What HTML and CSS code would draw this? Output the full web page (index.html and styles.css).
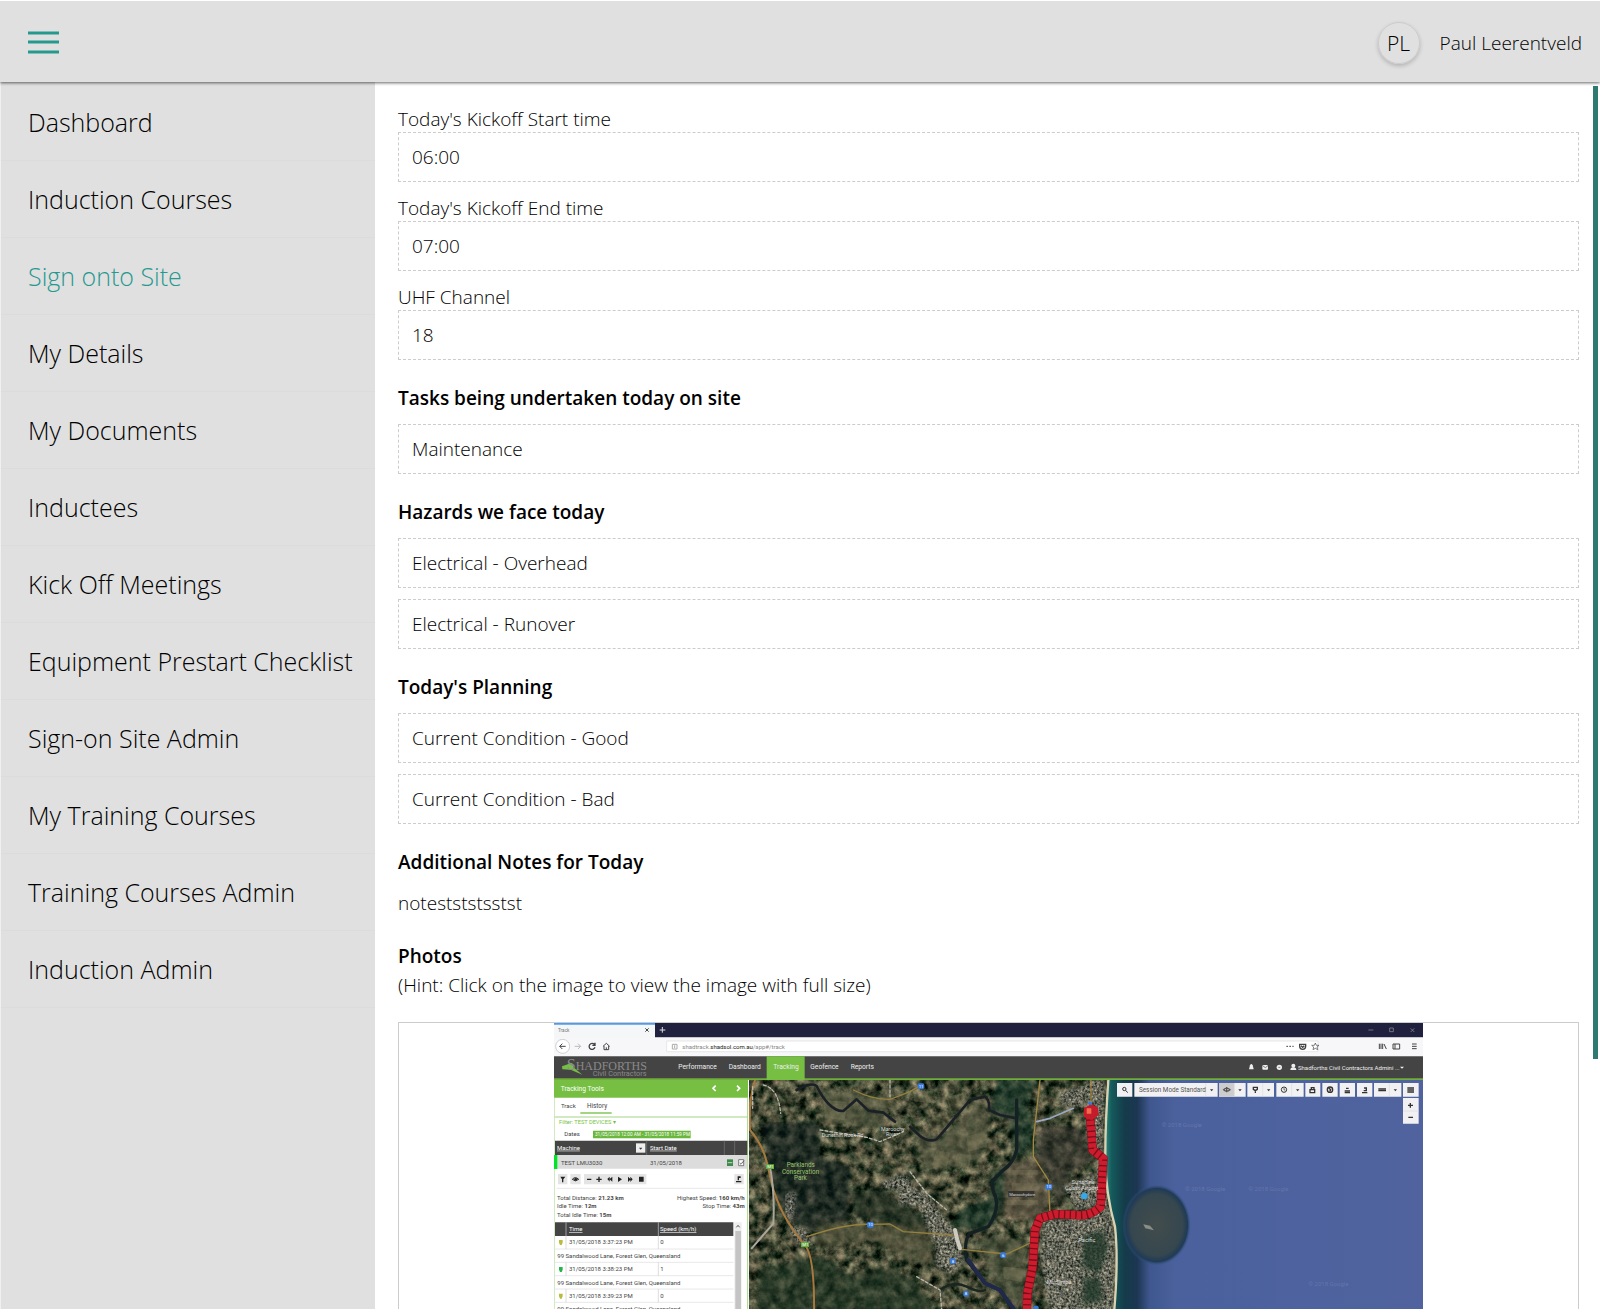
FILE: index.html
```
<!DOCTYPE html>
<html lang="en">
<head>
    <meta charset="UTF-8">
    <meta name="viewport" content="width=device-width, initial-scale=1.0">
    <title>Kick Off Meeting</title>
    <link rel="stylesheet" href="styles.css">
</head>
<body>
    <header class="topbar">
        <button type="button" class="menu-button" aria-label="Menu">
            <svg width="31" height="24" viewBox="0 0 31 24">
                <path d="M0 2h31M0 11h31M0 21h31" stroke="#26998f" stroke-width="3"/>
            </svg>
        </button>
        <div class="user">
            <span class="avatar">PL</span>
            <span>Paul Leerentveld</span>
        </div>
    </header>

    <div class="layout">
        <nav class="sidebar">
            <a href="#">Dashboard</a>
            <a href="#">Induction Courses</a>
            <a href="#" class="active">Sign onto Site</a>
            <a href="#">My Details</a>
            <a href="#">My Documents</a>
            <a href="#">Inductees</a>
            <a href="#">Kick Off Meetings</a>
            <a href="#">Equipment Prestart Checklist</a>
            <a href="#">Sign-on Site Admin</a>
            <a href="#">My Training Courses</a>
            <a href="#">Training Courses Admin</a>
            <a href="#">Induction Admin</a>
        </nav>

        <main class="content">
            <div class="field">
                <label for="startTime">Today's Kickoff Start time</label>
                <input type="text" id="startTime" class="box" value="06:00" readonly>
            </div>
            <div class="field">
                <label for="endTime">Today's Kickoff End time</label>
                <input type="text" id="endTime" class="box" value="07:00" readonly>
            </div>
            <div class="field">
                <label for="uhf">UHF Channel</label>
                <input type="text" id="uhf" class="box" value="18" readonly>
            </div>

            <h2>Tasks being undertaken today on site</h2>
            <ul class="list">
                <li class="box">Maintenance</li>
            </ul>

            <h2>Hazards we face today</h2>
            <ul class="list">
                <li class="box">Electrical - Overhead</li>
                <li class="box">Electrical - Runover</li>
            </ul>

            <h2>Today's Planning</h2>
            <ul class="list">
                <li class="box">Current Condition - Good</li>
                <li class="box">Current Condition - Bad</li>
            </ul>

            <h2>Additional Notes for Today</h2>
            <p class="notes">notestststsstst</p>

            <h2 class="photos-title">Photos</h2>
            <p>(Hint: Click on the image to view the image with full size)</p>

            <a href="#" class="photo" aria-label="View photo">
                <svg class="photo-image" viewBox="0 0 2607 1200">
                    <defs>
                        <linearGradient id="sea" x1="0" x2="1" y1="0" y2="0">
                            <stop offset="0" stop-color="#2a8a80"/>
                            <stop offset=".02" stop-color="#155a5c"/>
                            <stop offset=".06" stop-color="#143c4a"/>
                            <stop offset=".1" stop-color="#1c3652"/>
                            <stop offset=".14" stop-color="#3f578e"/>
                            <stop offset=".22" stop-color="#4a619d"/>
                            <stop offset="1" stop-color="#50639f"/>
                        </linearGradient>
                        <radialGradient id="reef">
                            <stop offset="0" stop-color="#424c4c"/>
                            <stop offset=".75" stop-color="#36474f"/>
                            <stop offset=".9" stop-color="#1f3b55"/>
                            <stop offset="1" stop-color="#3c568c" stop-opacity="0"/>
                        </radialGradient>
                        <filter id="ground" x="0" y="0" width="1" height="1" color-interpolation-filters="sRGB">
                            <feTurbulence type="fractalNoise" baseFrequency=".035" numOctaves="5" seed="8"/>
                            <feColorMatrix values=".9 .5 0 0 -.43  .7 .5 0 0 -.31  .6 .4 0 0 -.29  0 0 0 0 1"/>
                        </filter>
                        <filter id="town" x="0" y="0" width="1" height="1" color-interpolation-filters="sRGB">
                            <feTurbulence type="fractalNoise" baseFrequency=".14" numOctaves="3" seed="3"/>
                            <feColorMatrix values="1.2 0 0 0 -.15  1.2 0 0 0 -.15  1.1 0 0 0 -.14  0 0 0 0 1" result="n"/>
                            <feGaussianBlur in="SourceGraphic" stdDeviation="6" result="shape"/>
                            <feComposite in="n" in2="shape" operator="in"/>
                        </filter>
                        <filter id="soft"><feGaussianBlur stdDeviation="6"/></filter>
                        <clipPath id="mapClip"><path d="M27 60H2049V1100H27z"/></clipPath>
                    </defs>
                    <path d="M0 0H2607V1200H0z" fill="#fff"/>

                    <!-- browser window -->
                    <path d="M0 0H2607V43H0z" fill="#20213f"/>
                    <path d="M0 0H303V46H0z" fill="#f5f6f8"/>
                    <path d="M0 0H303V5H0z" fill="#4c9bf0"/>
                    <path d="M0 45H2607V100H0z" fill="#f7f7f9"/>
                    <path d="M338 54H2292V86H338z" fill="#fff" stroke="#ddd" stroke-width="2"/>
                    <g fill="none" stroke="#444" stroke-width="3">
                        <path d="M274 16l10 10M284 16l-10 10"/>
                        <circle cx="26" cy="70" r="21" fill="#fff" stroke="#bbb" stroke-width="2"/>
                        <path d="M35 70H17M25 62l-8 8 8 8"/>
                        <path d="M62 70h18M72 62l8 8-8 8" stroke="#bbb"/>
                        <path d="M121 64a9 9 0 1 0 2 9M123 59v8h-8" stroke-width="4"/>
                        <path d="M147 70l10-9 10 9M150 69v11h14V69M157 80v-7"/>
                        <path d="M355 64h14v14h-14zM362 67v8" stroke="#aaa"/>
                        <path d="M317 21h17M325 12v17" stroke="#ddd"/>
                        <path d="M2443 21h15M2507 15h11v11h-11zM2570 16l11 11M2581 16l-11 11" stroke="#999" stroke-width="2"/>
                        <path d="M2197 70h22" stroke-dasharray="5 4"/>
                        <path d="M2237 64h18v6a9 9 0 0 1-18 0zM2241 68l5 5 5-5" stroke-width="4"/>
                        <path d="M2284 60l3 7h8l-6 5 2 8-7-4-7 4 2-8-6-5h8z" stroke-width="2"/>
                        <path d="M2476 62v16M2481 62v16M2486 62v16M2490 63l7 15M2517 63h20v15h-20zM2523 63v15M2574 63h14M2574 70h14M2574 77h14"/>
                    </g>
                    <g class="tiny">
                        <text x="12" y="27" font-size="14" fill="#777">Track</text>
                        <text x="385" y="77" fill="#888" font-size="18">shadtrack.<tspan fill="#222">shadsol.com.au</tspan>/app#/track</text>
                    </g>

                    <!-- site header -->
                    <path d="M0 100H2607V171H0z" fill="#444"/>
                    <path d="M0 166H2607V171H0z" fill="#6fae3a"/>
                    <path d="M638 100H752V171H638z" fill="#76bf43"/>
                    <path d="M24 130l30-11 4 14 27 22-35-15-25-1z" fill="#76bf43"/>
                    <g class="logo" fill="#8a8a8a">
                        <text x="38" y="140" font-size="48">S</text>
                        <text x="65" y="140" font-size="36">HADFORTHS</text>
                    </g>
                    <g class="tiny" fill="#eee" font-size="20">
                        <text x="116" y="160" font-size="22" fill="#8a8a8a">Civil Contractors</text>
                        <text x="373" y="139">Performance</text>
                        <text x="524" y="139">Dashboard</text>
                        <text x="658" y="139">Tracking</text>
                        <text x="769" y="139">Geofence</text>
                        <text x="890" y="139">Reports</text>
                        <text x="2232" y="140" font-size="18">Shadforths Civil Contractors Admini ...</text>
                    </g>
                    <g fill="#eee">
                        <path d="M2085 139l3-12q4-8 8 0l3 12z"/>
                        <rect x="2125" y="126" width="17" height="14" rx="3"/>
                        <circle cx="2176" cy="133" r="8"/>
                        <circle cx="2218" cy="128" r="6"/>
                        <path d="M2209 141q0-8 9-8t9 8zM2538 131h12l-6 6z"/>
                    </g>
                    <path d="M2126 128l8 6 8-6M2173 133h6" fill="none" stroke="#444" stroke-width="2"/>

                    <!-- satellite map -->
                    <g transform="translate(558 111)" clip-path="url(#mapClip)">
                        <path d="M27 60H1140V1100H27z" filter="url(#ground)"/>
                        <g filter="url(#soft)" opacity=".6">
                            <path d="M60 190L235 185 240 290 330 320 325 480 230 520 160 490 100 400 80 270z" fill="#0a1f1d"/>
                            <path d="M330 400L420 385 470 420 560 480 550 530 440 490 350 470z" fill="#13271f"/>
                            <path d="M60 620L250 590 340 650 420 620 520 660 580 747 560 900H40z" fill="#1b3022"/>
                            <path d="M770 60H890L860 130 880 250 800 340 790 440 740 510 640 500 660 450 750 420 760 340 830 290 810 180 750 160z" fill="#12382a"/>
                            <path d="M900 200L1020 200 1060 300 990 340 960 440 930 360 890 290z" fill="#32302d"/>
                            <path d="M240 90L440 110 430 200 250 190z" fill="#5b6146"/>
                            <path d="M520 200L600 240 720 120 750 180 720 300 560 330z" fill="#5e6049"/>
                            <path d="M800 310L900 300 930 440 880 480 790 470z" fill="#6b5d4c"/>
                            <path d="M720 530L860 540 850 747 760 680z" fill="#505640"/>
                            <path d="M240 490L560 500 580 610 500 600 400 540 220 560z" fill="#58583f"/>
                        </g>
                        <g fill="#8a8665" opacity=".3">
                            <path d="M620 110l50-10 15 55-50 12zM560 180l60-25 20 50-60 20zM250 120l70 5-5 55-60-5zM680 230l60-20v50l-55 15zM815 330h80v14h-80zM815 370h80v22h-80zM800 420h95v16h-95zM650 280l45 5-10 40-40-8z"/>
                            <path d="M860 565l30 10-20 40-25-10zM790 620l60 6-4 40-55-10zM420 110l60 10-5 30-58-8zM520 90l60 4-8 36-50-6zM590 270l40 8-10 50-44-12z"/>
                        </g>
                        <g filter="url(#town)" opacity=".75">
                            <path d="M430 360L500 340 520 380 560 400 610 470 655 520 670 600 640 640 585 620 590 560 560 500 540 440 480 435 470 390 425 385z"/>
                            <path d="M1040 60L1095 60 1088 200 1088 340 1105 430 1125 540 1120 747 1118 900H1000L920 720 900 580 910 480 1060 470 1075 280 1040 240z"/>
                            <path d="M955 100L1040 75 1030 140 970 140zM970 380L1060 340 1070 440 1010 450zM135 400L170 400 160 480 135 470z"/>
                            <path d="M140 490L200 510 220 560 170 550z"/>
                        </g>
                        <path d="M1030 530l60-20 12 60-25 70-50-20zM1030 650l50 5 8 70-60 10z" fill="#1c3527" opacity=".75" filter="url(#soft)"/>
                        <g fill="none" stroke-linecap="round" stroke-linejoin="round">
                            <path d="M170 90Q215 65 230 78C250 120 280 155 310 153L350 118 385 152 430 158 465 185M510 200L540 228Q565 248 590 238L610 215 690 120 735 110Q750 120 747 150L780 165 830 175" stroke="#1a2026" stroke-width="8"/>
                            <path d="M830 120V270Q820 310 790 330L755 365 760 395Q785 440 745 500L690 520Q670 540 680 600L735 670 780 690 820 750" stroke="#142022" stroke-width="10"/>
                            <path d="M685 600L735 670 780 690 830 760" stroke="#20294a" stroke-width="12"/>
                            <path d="M600 690Q640 660 680 680T735 690" stroke="#1a2420" stroke-width="7"/>
                            <path d="M45 60Q25 120 30 210C80 270 80 310 95 370S140 490 190 550Q225 580 222 760" stroke="#a8793f" stroke-width="6"/>
                            <path d="M90 320Q105 400 100 490L35 565" stroke="#aaa79c" stroke-width="6"/>
                            <path d="M70 75Q115 85 122 160M38 80V145M450 60V110M240 210L380 232 420 245 490 215M510 335L560 400 620 450M530 650L600 690 605 747" stroke="#b9b6ab" stroke-width="4" stroke-dasharray="9 6"/>
                            <path d="M900 60L880 240 880 290 925 360 930 460M1053 60V130" stroke="#a08845" stroke-width="4"/>
                            <path d="M340 90Q400 120 450 118L510 95 535 80M200 530Q320 490 390 493L450 492 490 515 640 525M665 568L800 582 880 545" stroke="#95813f" stroke-width="4"/>
                            <path d="M890 185L930 175 1000 145" stroke="#9aa9c3" stroke-width="5"/>
                            <path d="M645 510L652 540 660 565" stroke="#cfcac0" stroke-width="12"/>
                        </g>

                        <path d="M1105 60Q1095 200 1096 300T1125 500Q1136 600 1122 760V1100H2049V60z" fill="url(#sea)"/>
                        <path d="M1105 60Q1095 200 1096 300T1125 500Q1136 600 1122 760V1100" fill="none" stroke="#d9d3b4" stroke-width="7"/>
                        <ellipse cx="1250" cy="495" rx="103" ry="122" fill="url(#reef)"/>
                        <path d="M1210 493l20 4 12 14-26-6z" fill="#8a8f86"/>

                        <!-- tracked route -->
                        <g fill="none" stroke-linejoin="round">
                            <path d="M1050 165L1058 270 1090 295 1082 440Q1050 470 1010 465L945 462 900 475 885 510 878 620 862 700 850 1100" stroke="#7c0e19" stroke-width="26"/>
                            <path d="M1050 165L1058 270 1090 295 1082 440Q1050 470 1010 465L945 462 900 475 885 510 878 620 862 700 850 1100" stroke="#cc1c2e" stroke-width="24" stroke-dasharray="13 4"/>
                        </g>
                        <path d="M1032 145l22-14 20 12 2 22-20 16-24-10z" fill="#c41c2a"/>
                        <path d="M1040 145h14v16h-14z" fill="#ef6b4c"/>

                        <g fill="#3778d8">
                            <rect x="533" y="70" width="20" height="17" rx="5"/>
                            <rect x="381" y="485" width="20" height="18" rx="5"/>
                            <rect x="916" y="372" width="21" height="17" rx="5"/>
                            <rect x="630" y="595" width="17" height="17" rx="5"/>
                            <rect x="781" y="577" width="17" height="17" rx="5"/>
                            <rect x="670" y="693" width="16" height="17" rx="5"/>
                            <rect x="880" y="737" width="16" height="17" rx="5"/>
                            <path d="M1043 132l6-8 8 4-2 8z"/>
                            <circle cx="1033" cy="408" r="10" fill="#35a8e8"/>
                        </g>
                        <path d="M78 313h24v14H78zM183 547h24v14h-24z" fill="#63ad3c"/>
                        <path d="M805 393h78v17h-78z" fill="#2b2b28" opacity=".8"/>
                        <g class="tiny" font-size="17" fill="#ddd">
                            <text x="808" y="407" font-size="12">Maroochydore</text>
                            <text x="245" y="230" font-size="16">Dunethin Rock Rd</text>
                            <text x="423" y="212" font-size="16">Maroochy</text>
                            <text x="438" y="228" font-size="16">River</text>
                            <text x="995" y="373">Sunshine</text>
                            <text x="975" y="391">Coast Airport</text>
                            <text x="920" y="672">Mudjimba</text>
                            <text x="1015" y="546">Pacific</text>
                            <g fill="#9cc46f" font-size="19">
                                <text x="140" y="321">Parklands</text>
                                <text x="126" y="341">Conservation</text>
                                <text x="162" y="360">Park</text>
                            </g>
                            <g fill="#6475ab" font-size="18">
                                <text x="1265" y="201">© 2018 Google</text>
                                <text x="1335" y="394">© 2018 Google</text>
                                <text x="1525" y="394">© 2018 Google</text>
                                <text x="1705" y="678">© 2018 Google</text>
                            </g>
                            <g fill="#fff" font-size="13">
                                <text x="536" y="83">11</text>
                                <text x="384" y="499">10</text>
                                <text x="919" y="385">10</text>
                                <text x="635" y="608">8</text>
                                <text x="786" y="590">6</text>
                                <text x="674" y="706">8</text>
                                <text x="82" y="325">M1</text>
                                <text x="187" y="559">M1</text>
                            </g>
                        </g>
                    </g>

                    <!-- map toolbar -->
                    <g transform="translate(1668 -24)">
                        <path d="M21 204h46v41H21zM73 204h250v41H73zM327 204h80v41h-80zM412 204h80v41h-80zM499 204h82v41h-82zM586 204h45v41h-45zM637 204h46v41h-46zM689 204h46v41h-46zM741 204h46v41h-46zM792 204h82v41h-82zM879 204h47v41h-47zM879 249h47v77h-47z" fill="#f1f1f3"/>
                        <path d="M327 204h46v41h-46z" fill="#ccc"/>
                        <path d="M287 204v41M373 204v41M458 204v41M545 204v41M838 204v41M879 288h47" stroke="#ddd" stroke-width="2"/>
                        <path d="M300 223h10l-5 6zM385 223h10l-5 6zM471 223h10l-5 6zM558 223h10l-5 6zM851 223h10l-5 6z" fill="#333"/>
                        <g fill="none" stroke="#333" stroke-width="4">
                            <circle cx="43" cy="222" r="5" stroke-width="3"/>
                            <path d="M47 226l6 7" stroke-width="3"/>
                            <path d="M341 224q9-9 19 0q-10 9-19 0zM350 216v16" stroke="#555"/>
                            <path d="M430 217h12v6l-6 4-6-4zM436 227v7"/>
                            <circle cx="522" cy="224" r="8" stroke-width="3"/>
                            <path d="M522 219v6h4" stroke-width="2"/>
                            <path d="M600 224h14v9h-14zM604 223v-5h8v5" />
                            <circle cx="660" cy="224" r="8"/>
                            <path d="M656 219l6 5-3 6"/>
                            <path d="M704 228h16M708 220h8M704 233h16M756 233h16M762 219h7v8h-8M805 222h23M805 227h23M892 219h20M892 225h20M892 231h20M894 271h15M901 264v14M895 307h14"/>
                        </g>
                        <text class="tiny" x="87" y="231" font-size="19" fill="#555">Session Mode Standard</text>
                    </g>

                    <!-- tracking tools panel -->
                    <g transform="translate(-12 -24)">
                        <path d="M12 195H594V1224H12z" fill="#fff"/>
                        <path d="M12 195H594V248H12z" fill="#76bf43"/>
                        <path d="M12 248v976M593 248v976M14 306h579" stroke="#a5d584" stroke-width="3"/>
                        <path d="M91 294h94" stroke="#76bf43" stroke-width="4"/>
                        <path d="M129 347h293v23H129z" fill="#69b83d"/>
                        <path d="M15 377H592V420H15z" fill="#444"/>
                        <path d="M523 377v43M554 377v43M290 377v43" stroke="#777" stroke-width="2"/>
                        <path d="M258 385h28v28h-28z" fill="#eee"/>
                        <path d="M267 398h10l-5 6z" fill="#333"/>
                        <path d="M15 420H592V461H15z" fill="#dcdcdc"/>
                        <path d="M12 420h10v42H12z" fill="#00e626"/>
                        <path d="M531 433h18v20h-18z" fill="#3d8a4a"/>
                        <path d="M533 443h14" stroke="#fff" stroke-width="2"/>
                        <path d="M566 434h15v18h-15zM569 444l4 4 9-11" fill="#fff" stroke="#444" stroke-width="2"/>
                        <path d="M497 212l-8 8 8 8M561 212l8 8-8 8" fill="none" stroke="#fff" stroke-width="5"/>
                        <path d="M24 477h28v31H24zM61 477h31v31H61zM102 477h187v31H102zM553 477h28v31h-28z" fill="#e4e4e4"/>
                        <g fill="#222">
                            <path d="M31 485h15l-6 8v9h-4v-9zM111 491h13v4h-13zM139 491h16v4h-16zM145 485h4v16h-4zM187 485v15l-8-7v7l-7-8 7-7v7zM204 485l12 8-12 8zM234 485l7 7v-7l7 8-7 8v-7l-7 7zM267 485h14v15h-14zM558 498h16v4h-16zM563 484h9v5h-5v7h-4z"/>
                        </g>
                        <path d="M67 493q9-10 19 0q-10 9-19 0z" fill="none" stroke="#222" stroke-width="3"/>
                        <circle cx="77" cy="493" r="4" fill="#222"/>
                        <path d="M20 520h564M15 702h535M15 742h535M15 782h535M15 822h535M15 862h535M15 902h535" stroke="#ddd" stroke-width="2"/>
                        <path d="M15 622H550V663H15z" fill="#444"/>
                        <path d="M48 622v80M325 622v80M48 742v40M325 742v40M48 822v40M325 822v40" stroke="#ccc" stroke-width="2"/>
                        <path d="M553 622h22v600h-22z" fill="#eee"/>
                        <path d="M556 648h17v574h-17z" fill="#c4c4c4"/>
                        <path d="M559 637l5-6 5 6" fill="none" stroke="#555" stroke-width="3"/>
                        <path d="M27 675h11v8l-3 7h-5l-3-7zM27 836h11v8l-3 7h-5l-3-7z" fill="#b9bd3d"/>
                        <path d="M27 756h11v8l-3 7h-5l-3-7z" fill="#27b44a"/>
                        <g class="tiny" font-size="18" fill="#444">
                            <text x="32" y="227" font-size="20" fill="#fff">Tracking Tools</text>
                            <text x="33" y="278">Track</text>
                            <text x="111" y="278" font-size="19">History</text>
                            <text x="27" y="326" font-size="17" fill="#76bf43">Filter: TEST DEVICES ▾</text>
                            <text x="43" y="363">Dates</text>
                            <text x="135" y="364" font-size="14" fill="#fff">31/05/2018 12:00 AM - 31/05/2018 11:59 PM</text>
                            <text x="21" y="404" fill="#fff" text-decoration="underline">Machine</text>
                            <text x="300" y="404" fill="#fff" text-decoration="underline">Start Date</text>
                            <text x="33" y="449">TEST LMU3030</text>
                            <text x="300" y="449">31/05/2018</text>
                            <text x="21" y="554">Total Distance: <tspan class="strong">21.23 km</tspan></text>
                            <text x="21" y="580">Idle Time: <tspan class="strong">12m</tspan></text>
                            <text x="21" y="605">Total Idle Time: <tspan class="strong">15m</tspan></text>
                            <text x="584" y="554" text-anchor="end">Highest Speed: <tspan class="strong">160 km/h</tspan></text>
                            <text x="584" y="580" text-anchor="end">Stop Time: <tspan class="strong">43m</tspan></text>
                            <text x="57" y="649" fill="#fff" text-decoration="underline">Time</text>
                            <text x="330" y="649" fill="#fff" text-decoration="underline">Speed (km/h)</text>
                            <text x="57" y="688">31/05/2018 3:37:23 PM</text>
                            <text x="331" y="688">0</text>
                            <text x="22" y="729">99 Sandalwood Lane, Forest Glen, Queensland</text>
                            <text x="57" y="769">31/05/2018 3:38:23 PM</text>
                            <text x="331" y="769">1</text>
                            <text x="22" y="809">99 Sandalwood Lane, Forest Glen, Queensland</text>
                            <text x="57" y="849">31/05/2018 3:39:23 PM</text>
                            <text x="331" y="849">0</text>
                            <text x="22" y="887">99 Sandalwood Lane, Forest Glen, Queensland</text>
                        </g>
                    </g>
                </svg>
            </a>
        </main>
        <div class="scroll-thumb"></div>
    </div>
</body>
</html>
```
FILE: styles.css
```
* {
  margin: 0;
  padding: 0;
  box-sizing: border-box;
}

body {
  display: flex;
  flex-direction: column;
  height: 100vh;
  overflow: hidden;
  font-family: 'Open Sans', 'Noto Sans', sans-serif;
  font-size: 19px;
  font-weight: 300;
  color: #000;
  background: #fff;
}

.topbar {
  display: flex;
  justify-content: space-between;
  align-items: center;
  height: 82px;
  padding: 3px 18px 0 28px;
  border-top: 1px solid #fff;
  background: #e0e0e0;
  box-shadow: 0 1px 3px rgba(0, 0, 0, 0.6);
  z-index: 1;
}

.menu-button {
  border: none;
  background: none;
  cursor: pointer;
}

.menu-button svg {
  display: block;
}

.user {
  display: flex;
  align-items: center;
  gap: 20px;
}

.avatar {
  display: flex;
  justify-content: center;
  align-items: center;
  width: 42px;
  height: 42px;
  border: 1px solid #ccc;
  border-radius: 50%;
  font-size: 21px;
  box-shadow: 0 2px 4px rgba(0, 0, 0, 0.2);
}

.layout {
  display: flex;
  flex: 1;
  min-height: 0;
  position: relative;
}

.sidebar {
  flex: 0 0 375px;
  padding-top: 2px;
  background: #e0e0e0;
  border-left: 1px solid #f0f0f0;
}

.sidebar a {
  display: block;
  padding: 20px 16px 20px 27px;
  border-bottom: 1px solid #dcdcdc;
  font-size: 25px;
  line-height: 36px;
  color: #000;
  text-decoration: none;
  white-space: nowrap;
}

.sidebar .active {
  color: #26998f;
}

.content {
  flex: 1;
  min-width: 0;
  overflow: hidden;
  padding: 25px 21px 0 23px;
}

.field {
  margin-bottom: 14px;
}

.field label {
  display: block;
  line-height: 25px;
}

.box {
  display: block;
  width: 100%;
  height: 50px;
  padding: 0 13px;
  border: 1px dashed #ccc;
  background: #fff;
  color: #000;
  font: inherit;
  line-height: 48px;
}

.list {
  list-style: none;
}

.list .box + .box {
  margin-top: 11px;
}

h2 {
  margin: 24px 0 12px;
  font-size: 19px;
  font-weight: 600;
  line-height: 28px;
}

.content p {
  line-height: 30px;
}

.photos-title {
  margin-bottom: 0;
}

.photo {
  display: block;
  margin-top: 22px;
  border: 1px solid #ccc;
}

.photo-image {
  display: block;
  width: 100%;
  max-width: 869px;
  margin: 0 auto;
}

.tiny {
  font-family: Roboto, sans-serif;
  font-weight: 400;
}

.logo {
  font-family: 'Liberation Serif', serif;
  font-weight: 400;
}

.strong {
  font-weight: 700;
}

.scroll-thumb {
  position: absolute;
  top: 4px;
  right: 2px;
  bottom: 250px;
  width: 5px;
  background: #2f7a70;
}
```
